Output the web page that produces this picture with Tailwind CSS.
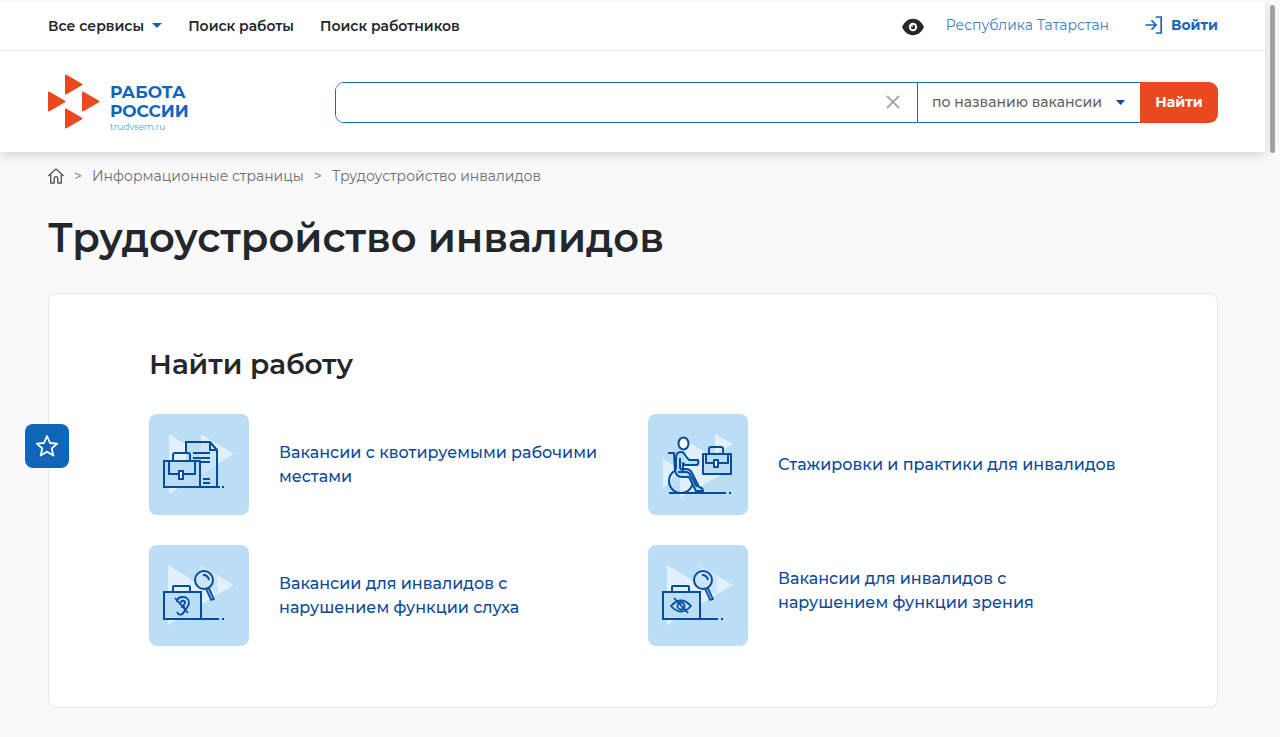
<!DOCTYPE html>
<html lang="ru">
<head>
<meta charset="utf-8">
<meta name="viewport" content="width=device-width, initial-scale=1">
<title>Трудоустройство инвалидов — Работа России</title>
<script src="https://cdn.jsdelivr.net/npm/@tailwindcss/browser@4"></script>
</head>
<body class="flex h-screen overflow-hidden bg-[#f9f9f9] font-['Montserrat','Inter','Noto_Sans',sans-serif] text-[#23272b]">
<div class="min-w-0 flex-1">
  <header class="border-t border-[#f5f5f5] bg-white shadow-[0_4px_10px_rgba(0,0,0,0.14)]">
    <div class="flex h-[50px] items-center justify-between border-b border-[#e9e9e9] pr-[47px] pl-12">
      <nav class="flex items-center gap-[26px] text-sm font-semibold" aria-label="Основное меню">
        <button type="button" class="flex items-center gap-2">Все сервисы
          <svg class="h-[5px] w-[10px]" viewBox="0 0 10 5" fill="#0d66bd"><path d="M0 0h10L5 5z"/></svg>
        </button>
        <a href="#">Поиск работы</a>
        <a href="#">Поиск работников</a>
      </nav>
      <div class="flex items-center pb-0.5 text-sm text-[#1966b8]">
        <button type="button" aria-label="Версия для слабовидящих" class="mr-[22px]">
          <svg class="mt-1 h-[18px] w-[22px]" viewBox="0 0 22 18"><path fill="#23272b" d="M11 .8C6 .8 2.400 4 0 9c2.400 5 6 8.200 11 8.200S19.600 14 22 9C19.600 4 16 .8 11 .8z"/><circle cx="11" cy="9" r="4.200" fill="#fff"/><circle cx="11" cy="9" r="2.200" fill="#23272b"/><circle cx="10" cy="8" r=".9" fill="#fff"/></svg>
        </button>
        <a href="#" class="mr-9 text-[#3d7fc4]">Республика Татарстан</a>
        <a href="#" class="flex items-center gap-2 font-bold">
          <svg class="h-[18px] w-[18px]" viewBox="0 0 18 18" fill="none" stroke="#1966b8" stroke-width="1.700" stroke-linecap="round" stroke-linejoin="round"><path d="M1 9h10M7 4.800 11.200 9 7 13.200M11.500 1h4.700v16h-4.700"/></svg>
          Войти
        </a>
      </div>
    </div>
    <div class="flex h-[101px] items-center pr-[47px] pl-12">
      <a href="#" class="flex w-[287px] shrink-0 items-center gap-[9px]" aria-label="Работа России">
        <svg class="h-14 w-[53px]" viewBox="0 0 53 56" fill="#e8491f" stroke="#e8491f" stroke-width="2" stroke-linejoin="round"><path d="M18 1.500v18l15.500-9zM1 18.500v18l15.500-9zM35 18.500v18l15.500-9zM18 35.500v18l15.500-9z"/></svg>
        <span class="mt-3 block">
          <span class="block text-[17px] leading-[19px] font-bold text-[#0d66bd]">РАБОТА</span>
          <span class="block text-[17px] leading-[19px] font-bold text-[#0d66bd]">РОССИИ</span>
          <span class="block text-[9px] leading-[11px] text-[#4ba3e0]">trudvsem.ru</span>
        </span>
      </a>
      <form class="mt-px flex h-[41px] min-w-0 flex-1 text-sm" role="search">
        <div class="relative min-w-0 flex-1 rounded-l-[9px] border border-[#1b69b6]">
          <input type="text" aria-label="Поисковый запрос" class="h-full w-full rounded-l-lg bg-white pr-10 pl-4 outline-none">
          <button type="button" aria-label="Очистить" class="absolute inset-y-0 right-[17px]">
            <svg class="h-3.5 w-3.5" viewBox="0 0 14 14" stroke="#a5a7a9" stroke-width="1.800"><path d="m1 1 12 12M13 1 1 13"/></svg>
          </button>
        </div>
        <div class="relative w-[222px] border-y border-[#1b69b6]">
          <select aria-label="Область поиска" class="h-full w-full appearance-none bg-white pl-[14px] font-medium text-[#5f6367] outline-none"><option>по названию вакансии</option></select>
          <svg class="pointer-events-none absolute inset-y-0 right-[15px] my-auto h-[5px] w-[9px]" viewBox="0 0 9 5" fill="#03489b"><path d="M0 0h9L4.500 5z"/></svg>
        </div>
        <button type="submit" class="w-[78px] rounded-r-[9px] bg-[#e8491f] font-bold text-white">Найти</button>
      </form>
    </div>
  </header>

  <main class="pr-[47px] pl-12">
    <nav class="flex h-12 items-center gap-[10px] text-sm text-[#6a6e72]" aria-label="Навигационная цепочка">
      <a href="#" aria-label="Главная"><svg class="h-4 w-4" viewBox="0 0 16 16" fill="none" stroke="#55595d" stroke-width="1.400" stroke-linejoin="round" stroke-linecap="round"><path d="M.8 7.500 8 1l7.200 6.500M2.700 6v9h3.500v-4.500a1.800 1.800 0 0 1 3.600 0V15h3.500V6"/></svg></a>
      <span>&gt;</span>
      <a href="#">Информационные страницы</a>
      <span>&gt;</span>
      <span>Трудоустройство инвалидов</span>
    </nav>
    <h1 class="mt-3 text-[40px] leading-[52px] font-semibold">Трудоустройство инвалидов</h1>

    <section class="mt-[29px] rounded-lg border border-[#e6e6e6] bg-white px-[100px] pt-[50px] pb-[61px]">
      <h2 class="text-[28px] leading-10 font-semibold">Найти работу</h2>
      <div class="mt-[30px] grid grid-cols-2 gap-[30px] text-base leading-6 font-medium text-[#0d4a96]">
        <a href="#" class="flex items-center gap-[30px]">
          <svg class="h-[101px] w-[100px] shrink-0 rounded-lg bg-[#bbddf6]" viewBox="0 0 100 101" fill="none" stroke="#034da1" stroke-width="2">
            <path fill="#e1f0fb" stroke="none" d="M20 20l49 30-49 30zM52 20l33 20-33 20z"/>
            <path fill="#bbddf6" stroke="none" d="M37 28h15v45H37zM15 47h36v26H15z"/><path fill="#cde5f8" stroke="none" d="M52 28h9l7 8v14l-17 10z"/>
            <path d="M37 40V28h24l7 8v37M61 28v8h7M44 39h17M44 44h17M51 48h10M54 65h7M54 69h7"/>
            <path d="M15 47h36v26H15zM20 47v13h11M35 60h11V47M24 46v-5q0-2 2-2h13q2 0 2 2v5M51 73h20M73 73h2"/><path fill="#fff" d="M30 57h4v8h-4z"/>
          </svg>
          <span>Вакансии с квотируемыми рабочими<br>местами</span>
        </a>
        <a href="#" class="flex items-center gap-[30px]">
          <svg class="h-[101px] w-[100px] shrink-0 rounded-lg bg-[#bbddf6]" viewBox="0 0 100 101" fill="none" stroke="#034da1" stroke-width="2" stroke-linejoin="round">
            <path fill="#e1f0fb" stroke="none" d="M32 23l53 31-53 30zM67 20l18 10-18 10zM15 45l17 10-17 20z"/>
            <path fill="#bbddf6" stroke="none" d="M55 40h28v20H55z"/>
            <circle cx="33" cy="67" r="12"/>
            <path d="M20 39h6l1 19"/>
            <path fill="#bbddf6" d="M33 38q-5 0-5 6v10q-2 3 1 7 2 2 5 2h7l7 14h7q0-3-4-4l-7-14q-2-4-6-4h-3v-6l2 2h12q2-1 1-5h-9l-4-5q-1-3-4-3z"/>
            <path d="M32 44v9q0 3 4 3M30 58h8q3 0 5 4l6 11"/>
            <ellipse cx="35.500" cy="29.500" rx="5" ry="6" fill="#fff"/>
            <path d="M55 40h28v20H55zM58 40v9h8M71 49h9v-9M61 39v-4q0-2 2-2h10q2 0 2 2v4M21 79h57M81 79h2"/><path fill="#fff" d="M66 46h4v7h-4z"/>
          </svg>
          <span>Стажировки и практики для инвалидов</span>
        </a>
        <a href="#" class="flex items-center gap-[30px]">
          <svg class="h-[101px] w-[100px] shrink-0 rounded-lg bg-[#bbddf6]" viewBox="0 0 100 101" fill="none" stroke="#034da1" stroke-width="2">
            <path fill="#e1f0fb" stroke="none" d="M19 20l49 30-49 30zM51 20l34 20-34 20z"/><path fill="#cde5f8" stroke="none" d="M51 20l18 10v20l-18-10z"/>
            <path fill="#bbddf6" d="M15 47h37v27H15z"/><path d="M24 47v-5q0-1 1-1h15q1 0 1 1v5M52 74h18M73 74h2"/>
            <circle cx="55" cy="35" r="9" fill="#cde5f8"/><path d="M54 30q5 0 6 5"/><path fill="#6d9ccb" d="m57 44 5 11 3-1-5-11z" stroke-width="1.500"/>
            <path d="M28 57c0-4 3-5 6-5 4 0 6 3 6 6 0 5-4 5-5 9-2 4-6 3-7 0M32 58c0-3 4-3 4 0 0 2-3 2-3 4h3M26 53l13 15" stroke-width="1.800"/>
          </svg>
          <span>Вакансии для инвалидов с<br>нарушением функции слуха</span>
        </a>
        <a href="#" class="flex items-center gap-[30px]">
          <svg class="h-[101px] w-[100px] shrink-0 rounded-lg bg-[#bbddf6]" viewBox="0 0 100 101" fill="none" stroke="#034da1" stroke-width="2">
            <path fill="#e1f0fb" stroke="none" d="M19 20l49 30-49 30zM51 20l34 20-34 20z"/><path fill="#cde5f8" stroke="none" d="M51 20l18 10v20l-18-10z"/>
            <path fill="#bbddf6" d="M15 47h37v27H15z"/><path d="M24 47v-5q0-1 1-1h15q1 0 1 1v5M52 74h18M73 74h2"/>
            <circle cx="55" cy="35" r="9" fill="#cde5f8"/><path d="M54 30q5 0 6 5"/><path fill="#6d9ccb" d="m57 44 5 11 3-1-5-11z" stroke-width="1.500"/>
            <path d="M23 61q10-11 20 0-10 11-20 0zM26 53l14 15" stroke-width="1.800"/><circle cx="33" cy="61" r="3.500" stroke-width="1.800"/>
          </svg>
          <span class="pb-[10px]">Вакансии для инвалидов с<br>нарушением функции зрения</span>
        </a>
      </div>
    </section>
  </main>
</div>
<div class="w-[15px] shrink-0 pt-[5px] pl-[5px]" aria-hidden="true"><div class="h-[148px] w-[5px] rounded-full bg-[#9fa2a5]"></div></div>

<button type="button" aria-label="Избранное" class="fixed top-[424px] left-[25px] flex h-11 w-11 items-center justify-center rounded-lg bg-[#0f66b9]">
  <svg class="h-6 w-6" viewBox="0 0 24 24" fill="none" stroke="#fff" stroke-width="1.800" stroke-linejoin="round"><path d="m12 2 3 7 7.200.6-5.500 4.800 1.700 7.200-6.400-3.900-6.400 3.900 1.700-7.200L1.800 9.600 9 9z"/></svg>
</button>
</body>
</html>
